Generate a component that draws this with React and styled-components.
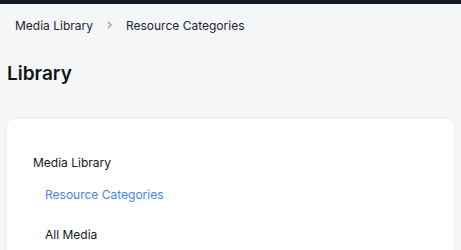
import React from "react";
import styled, { createGlobalStyle } from "styled-components";

const GlobalStyle = createGlobalStyle`
  html, body {
    margin: 0;
    padding: 0;
    background: #f5f6f8;
    font-family: Inter, "Noto Sans", sans-serif;
    color: #1f2430;
  }
`;

const TopBar = styled.div`
  height: 4px;
  background: #141a26;
`;

const Page = styled.div`
  padding: 0 7px;
`;

const Breadcrumbs = styled.nav`
  display: flex;
  align-items: center;
  gap: 14px;
  height: 42px;
  padding-left: 8px;
  font-size: 12px;
  color: #1f2430;
`;

const Chevron = styled.span`
  display: flex;
  align-items: center;
  color: #a3a8b1;
`;

const Title = styled.h1`
  margin: 0;
  padding-top: 16px;
  font-size: 19px;
  font-weight: 600;
  color: #111418;
  line-height: 24px;
`;

const Card = styled.div`
  margin-top: 33px;
  background: #fff;
  border-radius: 7px;
  box-shadow: 0 0 3px rgba(0, 0, 0, 0.06);
  padding: 35px 26px 20px;
  height: 180px;
`;

const NavItem = styled.div`
  font-size: 12px;
  line-height: 18px;
  padding-left: ${(p) => (p.$nested ? "12px" : "0")};
  margin-bottom: ${(p) => p.$gap || "0"};
  color: ${(p) => (p.$active ? "#4a84e0" : "#14171c")};
`;

const ChevronIcon = () => (
  <svg width="5" height="10" viewBox="0 0 5 10" fill="none">
    <path d="M0.8 1.8 L4 5 L0.8 8.2" stroke="currentColor" strokeWidth="1.5" />
  </svg>
);

export default function App() {
  return (
    <>
      <GlobalStyle />
      <TopBar />
      <Page>
        <Breadcrumbs>
          <span>Media Library</span>
          <Chevron>
            <ChevronIcon />
          </Chevron>
          <span>Resource Categories</span>
        </Breadcrumbs>
        <Title>Library</Title>
        <Card>
          <NavItem $gap="14px">Media Library</NavItem>
          <NavItem $nested $active $gap="22px">
            Resource Categories
          </NavItem>
          <NavItem $nested>All Media</NavItem>
        </Card>
      </Page>
    </>
  );
}
